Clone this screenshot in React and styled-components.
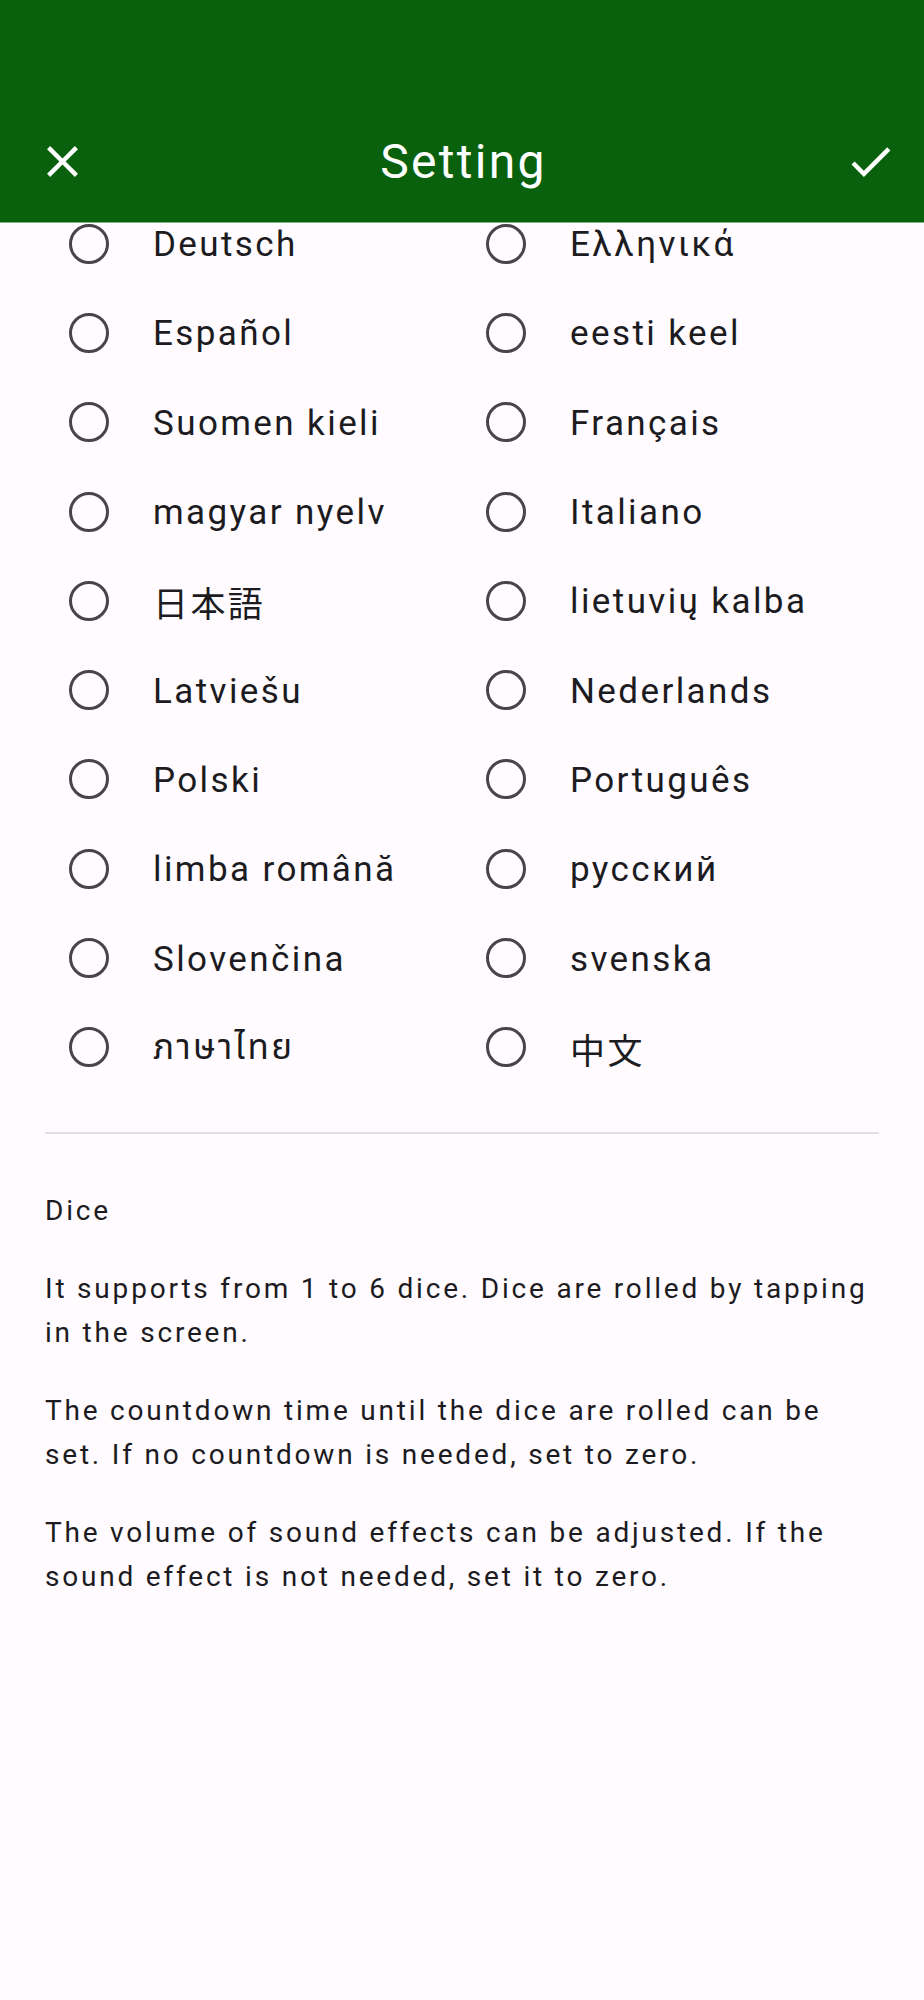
import React from 'react';
import styled, { createGlobalStyle } from 'styled-components';
import { MdClose, MdCheck } from 'react-icons/md';

const GlobalStyle = createGlobalStyle`
  html, body {
    margin: 0;
    padding: 0;
    background: #fffbfe;
  }
  body {
    font-family: Roboto, "Noto Sans", "Noto Sans CJK JP", sans-serif;
    color: #1c1b1f;
  }
`;

const Page = styled.div`
  min-height: 2000px;
  background: #fffbfe;
  display: flex;
  flex-direction: column;
`;

const Header = styled.header`
  background: #09610e;
  padding-top: 100px;
  border-bottom: 1px solid #7fb583;
  position: relative;
  z-index: 2;
`;

const Toolbar = styled.div`
  height: 122px;
  display: grid;
  grid-template-columns: 1fr auto 1fr;
  align-items: center;
  padding: 0 27px 0 36px;
`;

const IconButton = styled.button`
  width: 53px;
  height: 53px;
  padding: 0;
  border: none;
  background: transparent;
  color: #ffffff;
  display: flex;
  align-items: center;
  justify-content: center;
  justify-self: ${(p) => (p.$end ? 'end' : 'start')};
  svg {
    width: 53px;
    height: 53px;
  }
`;

const Title = styled.h1`
  margin: 0;
  font-family: Roboto, sans-serif;
  font-weight: 400;
  font-size: 48px;
  color: #ffffff;
  letter-spacing: 2.3px;
  transform: translateX(-3px);
`;

const Body = styled.main`
  overflow: hidden;
  padding: 0 45px;
`;

const LangGrid = styled.div`
  margin-top: -24px;
  display: grid;
  grid-template-columns: 1fr 1fr;
  grid-auto-rows: 89.3px;
`;

const LangRow = styled.label`
  display: flex;
  align-items: center;
  gap: 20px;
`;

const RadioBox = styled.span`
  width: 88px;
  height: 88px;
  display: flex;
  align-items: center;
  justify-content: center;
  flex-shrink: 0;
`;

const RadioRing = styled.span`
  width: 40px;
  height: 40px;
  box-sizing: border-box;
  border: 3.4px solid #47444c;
  border-radius: 50%;
`;

const LangName = styled.span`
  font-size: 35px;
  letter-spacing: 2.4px;
  padding-top: 2px;
  font-family: Roboto, "Noto Sans", "Noto Sans Thai", "Noto Sans CJK JP", sans-serif;
  white-space: nowrap;
`;

const Divider = styled.hr`
  margin: 40px 0 0;
  border: none;
  height: 2px;
  background: #e2dfe3;
`;

const Help = styled.section`
  padding-top: 55px;
  display: flex;
  flex-direction: column;
  gap: 35px;
`;

const HelpText = styled.p`
  margin: 0;
  font-size: 28px;
  line-height: 43.5px;
  letter-spacing: 2.8px;
`;

const languages = [
  'Deutsch', 'Ελληνικά',
  'Español', 'eesti keel',
  'Suomen kieli', 'Français',
  'magyar nyelv', 'Italiano',
  '日本語', 'lietuvių kalba',
  'Latviešu', 'Nederlands',
  'Polski', 'Português',
  'limba română', 'русский',
  'Slovenčina', 'svenska',
  'ภาษาไทย', '中文',
];

const help = [
  'Dice',
  'It supports from 1 to 6 dice. Dice are rolled by tapping in the screen.',
  'The countdown time until the dice are rolled can be set. If no countdown is needed, set to zero.',
  'The volume of sound effects can be adjusted. If the sound effect is not needed, set it to zero.',
];

export default function App() {
  return (
    <Page>
      <GlobalStyle />
      <Header>
        <Toolbar>
          <IconButton aria-label="Close"><MdClose /></IconButton>
          <Title>Setting</Title>
          <IconButton aria-label="Save" $end><MdCheck /></IconButton>
        </Toolbar>
      </Header>
      <Body>
        <LangGrid>
          {languages.map((name) => (
            <LangRow key={name}>
              <RadioBox><RadioRing /></RadioBox>
              <LangName>{name}</LangName>
            </LangRow>
          ))}
        </LangGrid>
        <Divider />
        <Help>
          {help.map((t) => (
            <HelpText key={t}>{t}</HelpText>
          ))}
        </Help>
      </Body>
    </Page>
  );
}
